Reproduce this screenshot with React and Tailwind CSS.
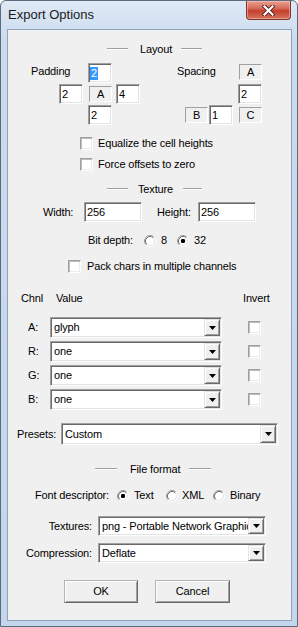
import React from "react";

const sunken =
  "border border-t-[#a0a0a0] border-l-[#a0a0a0] border-r-white border-b-white shadow-[inset_1px_1px_0_#696969,inset_-1px_-1px_0_#e3e3e3]";

function Edit({ className = "", children, selected }) {
  return (
    <div
      className={`bg-white ${sunken} flex items-center overflow-hidden whitespace-nowrap ${
        selected ? "pl-[1px]" : "pl-[2px]"
      } ${className}`}
    >
      {selected ? (
        <span className="bg-[#3399ff] text-white px-[1px] leading-[13px]">{children}</span>
      ) : (
        children
      )}
    </div>
  );
}

function Static({ className = "", children }) {
  return (
    <div
      className={`w-[23px] h-[16px] border border-t-[#a0a0a0] border-l-[#a0a0a0] border-r-white border-b-white flex items-center justify-center ${className}`}
    >
      {children}
    </div>
  );
}

function Check({ className = "" }) {
  return (
    <div
      className={`w-[13px] h-[13px] shrink-0 bg-white border border-t-[#a0a0a0] border-l-[#a0a0a0] border-r-white border-b-white shadow-[inset_1px_1px_0_#bcbcbc,inset_-1px_-1px_0_#ececec] ${className}`}
    />
  );
}

function Radio({ checked }) {
  return (
    <svg width="12" height="12" viewBox="0 0 12 12" className="shrink-0">
      <circle cx="6" cy="6" r="4.5" fill="#fff" />
      <path d="M2.11 9.89 A5.5 5.5 0 0 1 9.89 2.11" fill="none" stroke="#a0a0a0" strokeWidth="1" />
      <path d="M9.89 2.11 A5.5 5.5 0 0 1 2.11 9.89" fill="none" stroke="#ffffff" strokeWidth="1" />
      <path d="M2.82 9.18 A4.5 4.5 0 0 1 9.18 2.82" fill="none" stroke="#696969" strokeWidth="1" />
      <path d="M9.18 2.82 A4.5 4.5 0 0 1 2.82 9.18" fill="none" stroke="#e3e3e3" strokeWidth="1" />
      {checked && <rect x="4" y="4" width="4" height="4" rx="1.2" fill="#000" />}
    </svg>
  );
}

function Combo({ className = "", children }) {
  return (
    <div className={`bg-white ${sunken} p-px flex ${className}`}>
      <div className="flex-1 min-w-0 flex items-center pl-[2px] overflow-hidden whitespace-nowrap">
        {children}
      </div>
      <div className="w-[16px] shrink-0 bg-[#f0f0f0] border border-t-[#e3e3e3] border-l-[#e3e3e3] border-r-[#696969] border-b-[#696969] shadow-[inset_1px_1px_0_#fff,inset_-1px_-1px_0_#a0a0a0] flex items-center justify-center">
        <svg width="7" height="4" viewBox="0 0 7 4">
          <polygon points="0,0 7,0 3.5,4" fill="#000" />
        </svg>
      </div>
    </div>
  );
}

function Line({ className = "" }) {
  return <div className={`h-[2px] border-t border-t-[#a0a0a0] border-b border-b-white ${className}`} />;
}

function Button({ className = "", children }) {
  return (
    <div
      className={`h-[23px] bg-[#f0f0f0] border border-t-[#b4b4b4] border-l-[#b4b4b4] border-r-[#696969] border-b-[#696969] shadow-[inset_1px_1px_0_#fff,inset_-1px_-1px_0_#a0a0a0] flex items-center justify-center ${className}`}
    >
      {children}
    </div>
  );
}

export default function App() {
  return (
    <div className="w-[298px] h-[627px] relative flex flex-col border border-[#5b6b7d] rounded-t-[6px] overflow-hidden bg-[linear-gradient(#dfe9f5,#cadbee_40px,#c4d6ea)] font-['Liberation_Sans',Arial,sans-serif] text-black">
      {/* title bar */}
      <div className="h-[28px] shrink-0 flex items-center pl-[7px] text-[13px] text-[#1a1a1a]">
        Export Options
      </div>
      <div className="absolute top-0 right-[6px] w-[45px] h-[19px] rounded-b-[4px] border border-t-0 border-[#80352b] bg-[linear-gradient(#e8a292,#d66c5a_40%,#c33f2b_55%,#d6735f)] flex items-center justify-center shadow-[inset_0_0_0_1px_rgba(255,200,190,0.5)]">
        <svg width="13" height="11" viewBox="0 0 13 11">
          <path d="M2.5 1.5 L10.5 9.5 M10.5 1.5 L2.5 9.5" stroke="#5a1f18" strokeWidth="4" strokeLinecap="square" fill="none" />
          <path d="M2.5 1.5 L10.5 9.5 M10.5 1.5 L2.5 9.5" stroke="#ffffff" strokeWidth="2.2" strokeLinecap="square" fill="none" />
        </svg>
      </div>

      {/* client */}
      <div className="flex-1 mx-[6px] mr-[5px] mb-[5px] border border-[#8fa3bc] bg-[#f0f0f0] flex flex-col text-[11px] leading-[13px] tracking-[-0.15px]">
        {/* Layout heading */}
        <div className="mt-[12px] h-[14px] flex items-center pl-[99px]">
          <Line className="w-[21px]" />
          <span className="ml-[12px]">Layout</span>
          <Line className="ml-[9px] w-[21px]" />
        </div>

        {/* padding / spacing block */}
        <div className="mt-[7px] flex flex-col gap-px">
          <div className="h-[20px] flex items-center">
            <div className="w-[80px] pl-[23px] mb-[4px]">Padding</div>
            <Edit selected className="w-[24px] h-[20px]">2</Edit>
            <div className="w-[65px]" />
            <div className="w-[62px] mb-[4px]">Spacing</div>
            <Static className="mb-[2px]">A</Static>
          </div>
          <div className="h-[20px] flex items-center pl-[51px]">
            <Edit className="w-[24px] h-[20px]">2</Edit>
            <Static className="ml-[6px]">A</Static>
            <Edit className="ml-[4px] w-[24px] h-[20px]">4</Edit>
            <Edit className="ml-[98px] w-[24px] h-[20px]">2</Edit>
          </div>
          <div className="h-[20px] flex items-center pl-[80px]">
            <Edit className="w-[24px] h-[20px]">2</Edit>
            <Static className="ml-[73px]">B</Static>
            <Edit className="ml-[1px] w-[24px] h-[20px]">1</Edit>
            <Static className="ml-[6px]">C</Static>
          </div>
        </div>

        <div className="mt-[12px] h-[13px] flex items-center pl-[72px]">
          <Check />
          <span className="ml-[5px]">Equalize the cell heights</span>
        </div>
        <div className="mt-[8px] h-[13px] flex items-center pl-[72px]">
          <Check />
          <span className="ml-[5px]">Force offsets to zero</span>
        </div>

        {/* Texture heading */}
        <div className="mt-[11px] h-[14px] flex items-center pl-[99px]">
          <Line className="w-[21px]" />
          <span className="ml-[10px]">Texture</span>
          <Line className="ml-[10px] w-[19px]" />
        </div>

        <div className="mt-[6px] h-[20px] flex items-center">
          <div className="w-[76px] pl-[35px]">Width:</div>
          <Edit className="w-[58px] h-[20px]">256</Edit>
          <div className="ml-[15px] w-[41px]">Height:</div>
          <Edit className="w-[58px] h-[20px]">256</Edit>
        </div>

        <div className="mt-[12px] h-[13px] flex items-center pl-[80px]">
          <div className="w-[56px]">Bit depth:</div>
          <Radio />
          <div className="ml-[5px] w-[16px]">8</div>
          <Radio checked />
          <div className="ml-[5px]">32</div>
        </div>

        <div className="mt-[13px] h-[13px] flex items-center pl-[60px]">
          <Check />
          <span className="ml-[6px]">Pack chars in multiple channels</span>
        </div>

        <div className="mt-[19px] h-[13px] flex items-center">
          <div className="w-[48px] pl-[13px]">Chnl</div>
          <div className="w-[187px]">Value</div>
          <div>Invert</div>
        </div>

        <div className="mt-[12px] flex flex-col gap-[3px]">
          {[
            ["A:", "glyph"],
            ["R:", "one"],
            ["G:", "one"],
            ["B:", "one"],
          ].map(([l, v]) => (
            <div key={l} className="h-[21px] flex items-center">
              <div className="w-[42px] pl-[20px]">{l}</div>
              <Combo className="w-[172px] h-[21px]">{v}</Combo>
              <Check className="ml-[26px]" />
            </div>
          ))}
        </div>

        <div className="mt-[13px] h-[22px] flex items-center">
          <div className="w-[53px] pl-[9px]">Presets:</div>
          <Combo className="w-[217px] h-[22px]">Custom</Combo>
        </div>

        {/* File format heading */}
        <div className="mt-[17px] h-[14px] flex items-center pl-[87px]">
          <Line className="w-[22px]" />
          <span className="ml-[13px]">File format</span>
          <Line className="ml-[9px] w-[22px]" />
        </div>

        <div className="mt-[13px] h-[13px] flex items-center">
          <div className="w-[109px] pl-[27px]">Font descriptor:</div>
          <Radio checked />
          <div className="ml-[5px] w-[32px]">Text</div>
          <Radio />
          <div className="ml-[4px] w-[31px]">XML</div>
          <Radio />
          <div className="ml-[5px]">Binary</div>
        </div>

        <div className="mt-[14px] h-[20px] flex items-center">
          <div className="w-[84px] text-right">Textures:</div>
          <Combo className="ml-[6px] w-[168px] h-[20px]">png - Portable Network Graphics</Combo>
        </div>
        <div className="mt-[7px] h-[20px] flex items-center">
          <div className="w-[84px] text-right">Compression:</div>
          <Combo className="ml-[6px] w-[168px] h-[20px]">Deflate</Combo>
        </div>

        <div className="mt-[17px] flex">
          <Button className="ml-[56px] w-[74px]">OK</Button>
          <Button className="ml-[17px] w-[75px]">Cancel</Button>
        </div>
      </div>
    </div>
  );
}
